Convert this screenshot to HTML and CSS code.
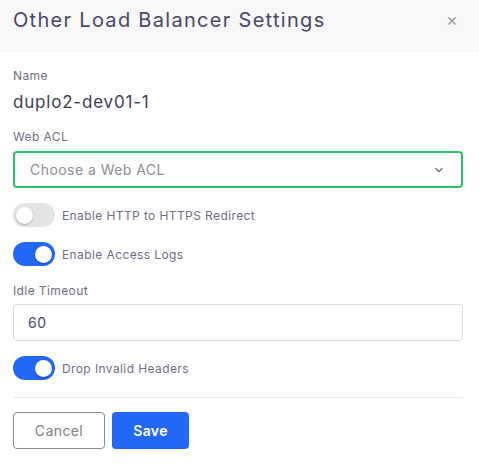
FILE: index.html
```html
<!DOCTYPE html>
<html>
<head>
<meta charset="utf-8">
<link rel="stylesheet" href="styles.css">
</head>
<body>
<div class="modal">
  <div class="header">
    <h1 class="title">Other Load Balancer Settings</h1>
    <span class="close">&times;</span>
  </div>
  <div class="body">
    <div class="field">
      <div class="label">Name</div>
      <div class="value">duplo2-dev01-1</div>
    </div>
    <div class="field">
      <div class="label">Web ACL</div>
      <div class="select">
        <span class="placeholder">Choose a Web ACL</span>
        <svg class="chev" width="10" height="6" viewBox="0 0 10 6"><path d="M1.5 1.2 L5 4.5 L8.5 1.2" fill="none" stroke="#777" stroke-width="1.5"/></svg>
      </div>
    </div>
    <div class="toggle-row">
      <span class="switch off"><span class="knob"></span></span>
      <span class="tlabel">Enable HTTP to HTTPS Redirect</span>
    </div>
    <div class="toggle-row">
      <span class="switch on"><span class="knob"></span></span>
      <span class="tlabel">Enable Access Logs</span>
    </div>
    <div class="field">
      <div class="label">Idle Timeout</div>
      <div class="input">60</div>
    </div>
    <div class="toggle-row">
      <span class="switch on"><span class="knob"></span></span>
      <span class="tlabel">Drop Invalid Headers</span>
    </div>
  </div>
  <div class="footer">
    <button class="btn cancel">Cancel</button>
    <button class="btn save">Save</button>
  </div>
</div>
</body>
</html>
```
FILE: styles.css
```css
html, body { margin: 0; padding: 0; background: #fff; }
body { font-family: "Inter", "Noto Sans", sans-serif; color: #3f3d56; }
.modal { width: 479px; }
.header {
  height: 52px; background: #f7f7f7;
  display: flex; align-items: center; justify-content: space-between;
  padding: 0 21px 0 13px; box-sizing: border-box;
}
.title { margin: 0; font-size: 20px; font-weight: 400; color: #4a4866; letter-spacing: 1.3px; position: relative; top: -6px; }
.close { font-size: 18px; color: #a0a0a8; position: relative; top: -7px; }
.body { padding: 16px 16px 0 13px; display: flex; flex-direction: column; }
.field { display: flex; flex-direction: column; }
.label { font-size: 12px; color: #6f6e80; line-height: 16px; letter-spacing: 0.4px; }
.value { font-size: 17px; color: #3f3d56; margin-top: 8px; line-height: 20px; margin-bottom: 17px; letter-spacing: 0.8px; }
.select, .input {
  margin-top: 6px; height: 37px; box-sizing: border-box; border-radius: 4px;
  display: flex; align-items: center; padding: 0 15px; font-size: 14px; letter-spacing: 0.45px;
}
.select { border: 2px solid #2ec06b; justify-content: space-between; padding-right: 17px; }
.placeholder { color: #8c8c94; }
.input { border: 1px solid #d9d9de; color: #4a4866; padding-left: 14px; margin-top: 5px; }
.toggle-row { display: flex; align-items: center; gap: 7px; height: 24px; }
.toggle-row + .toggle-row { margin-top: 15px; }
.field + .toggle-row { margin-top: 15px; }
.toggle-row + .field { margin-top: 17px; }
.switch { width: 42px; height: 24px; border-radius: 12px; display: flex; align-items: center; padding: 0 3px; box-sizing: border-box; }
.switch.off { background: #e3e3e3; justify-content: flex-start; }
.switch.on { background: #2268f5; justify-content: flex-end; }
.knob { width: 17px; height: 17px; border-radius: 50%; background: #fff; box-shadow: 0 1px 2px rgba(0,0,0,0.25); }
.tlabel { font-size: 12px; color: #6f6e80; letter-spacing: 0.4px; }
.footer { margin: 17px 16px 0 13px; border-top: 1px solid #ececef; padding-top: 14px; display: flex; gap: 7px; }
.btn { height: 37px; border-radius: 4px; font-family: inherit; font-size: 14px; box-sizing: border-box; letter-spacing: 0.4px; }
.cancel { width: 92px; background: #fff; border: 1px solid #8a8a8f; color: #808085; }
.save { width: 77px; background: #2268f5; border: none; color: #fff; font-weight: 600; }
```
